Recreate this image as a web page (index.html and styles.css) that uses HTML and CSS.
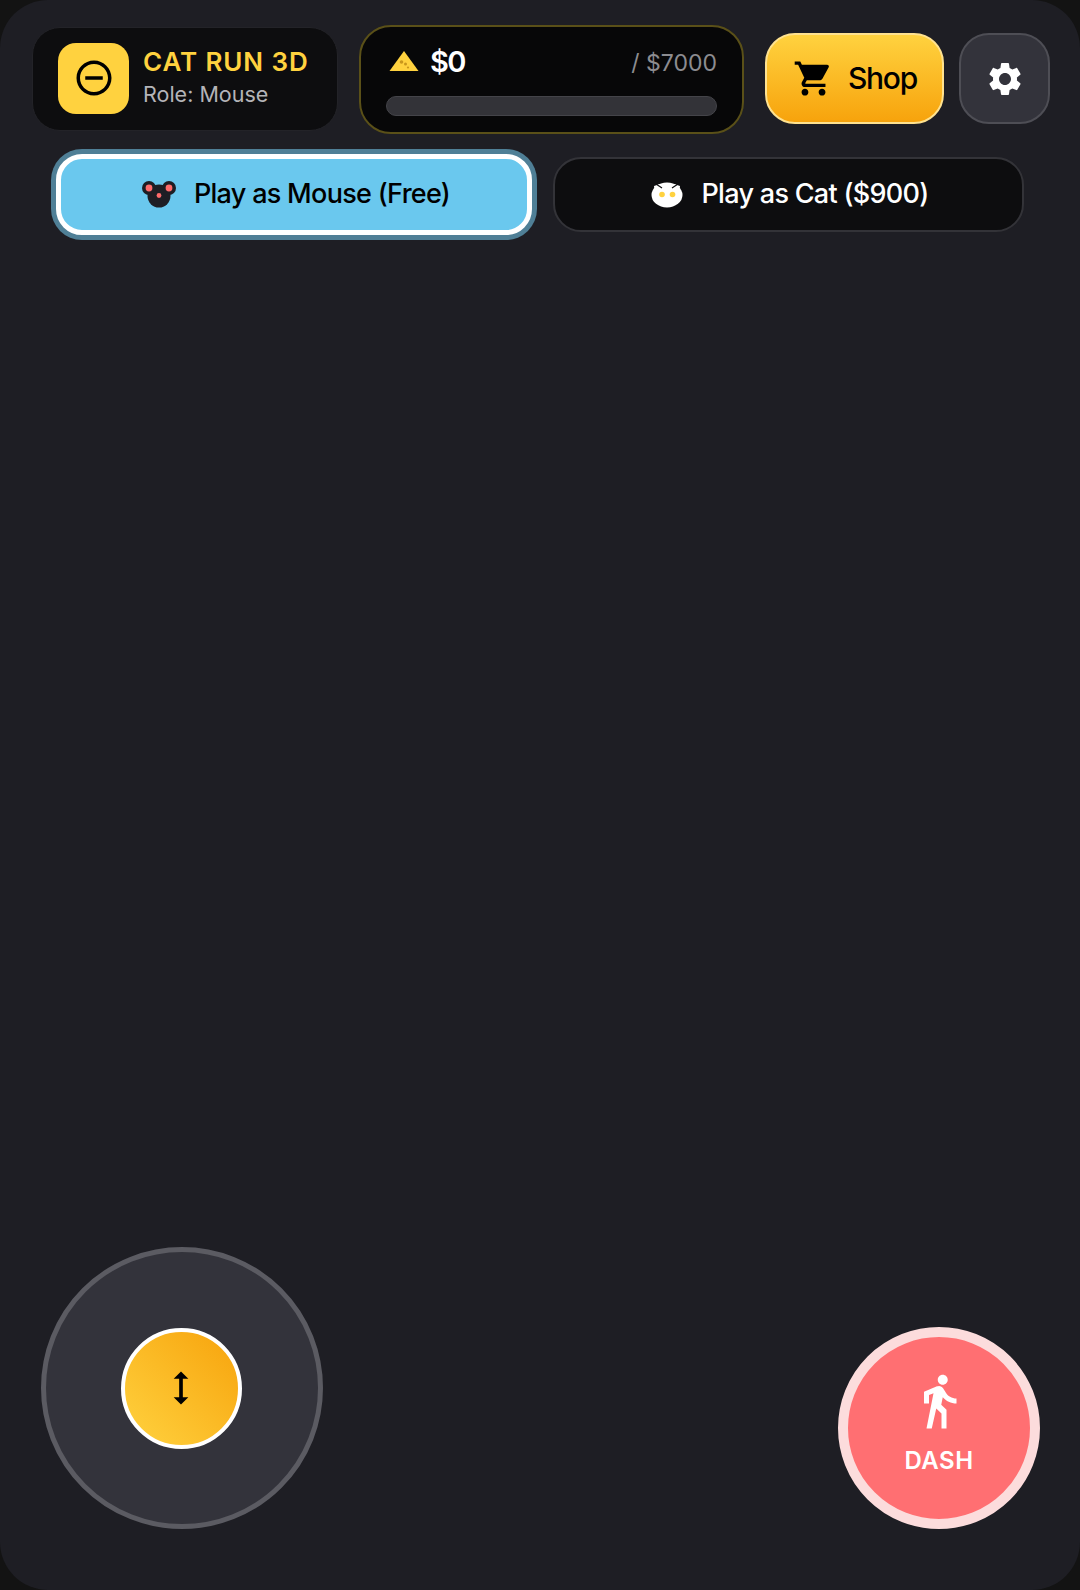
FILE: index.html
```html
<!DOCTYPE html>
<html lang="en">
<head>
    <title>Cat Run 3D</title>
    <link rel="stylesheet" href="styles.css">
</head>
<body>
    <div class="frame">
        <div class="topbar">
            <div class="title-panel">
                <div class="logo">
                    <svg class="logo-icon" viewBox="0 0 24 24"><path d="M7 11v2h10v-2H7zm5-9C6.48 2 2 6.48 2 12s4.48 10 10 10 10-4.48 10-10S17.52 2 12 2zm0 18c-4.41 0-8-3.59-8-8s3.59-8 8-8 8 3.59 8 8-3.59 8-8 8z"/></svg>
                </div>
                <div class="title-text">
                    <div class="game-name">CAT RUN 3D</div>
                    <div class="role">Role: Mouse</div>
                </div>
            </div>

            <div class="score-panel">
                <div class="score-row">
                    <svg class="cheese" viewBox="0 0 30 22">
                        <path d="M15 1L29.500 21H.5z" fill="#ffd23f"/>
                        <circle cx="12.500" cy="12" r="1.800" fill="#c9971c"/>
                        <circle cx="16.500" cy="14" r="1.500" fill="#c9971c"/>
                        <circle cx="19" cy="17.500" r="1.100" fill="#c9971c"/>
                    </svg>
                    <span class="score">$0</span>
                    <span class="goal">/ $7000</span>
                </div>
                <div class="progress"></div>
            </div>

            <button class="shop-btn">
                <svg class="shop-icon" viewBox="0 0 24 24"><path d="M7 18c-1.100 0-1.990.9-1.990 2S5.900 22 7 22s2-.9 2-2-.9-2-2-2zM1 2v2h2l3.600 7.590-1.350 2.450c-.16.28-.25.61-.25.96 0 1.100.9 2 2 2h12v-2H7.420c-.14 0-.25-.11-.25-.25l.03-.12.9-1.630h7.450c.75 0 1.410-.41 1.750-1.030l3.580-6.490c.08-.14.12-.31.12-.48 0-.55-.45-1-1-1H5.210l-.94-2H1zm16 16c-1.100 0-1.990.9-1.990 2s.89 2 1.990 2 2-.9 2-2-.9-2-2-2z"/></svg>
                <span class="shop-label">Shop</span>
            </button>

            <button class="settings-btn">
                <svg class="settings-icon" viewBox="0 0 24 24"><path d="M19.140 12.940c.04-.3.06-.61.06-.94 0-.32-.02-.64-.07-.94l2.030-1.580c.18-.14.23-.41.12-.61l-1.920-3.320c-.12-.22-.37-.29-.59-.22l-2.390.96c-.5-.38-1.030-.7-1.620-.94l-.36-2.540c-.04-.24-.24-.41-.48-.41h-3.840c-.24 0-.43.17-.47.41l-.36 2.540c-.59.24-1.130.57-1.620.94l-2.390-.96c-.22-.08-.47 0-.59.22L2.740 8.870c-.12.21-.08.47.12.61l2.030 1.580c-.05.3-.09.63-.09.94s.02.64.07.94l-2.030 1.580c-.18.14-.23.41-.12.61l1.920 3.320c.12.22.37.29.59.22l2.390-.96c.5.38 1.030.7 1.620.94l.36 2.540c.05.24.24.41.48.41h3.840c.24 0 .44-.17.47-.41l.36-2.540c.59-.24 1.130-.56 1.620-.94l2.390.96c.22.08.47 0 .59-.22l1.920-3.320c.12-.22.07-.47-.12-.61l-2.010-1.580zM12 15.600c-1.980 0-3.600-1.620-3.600-3.600s1.620-3.600 3.600-3.600 3.600 1.620 3.600 3.600-1.620 3.600-3.600 3.600z"/></svg>
            </button>
        </div>

        <div class="modes">
            <button class="mode-btn mode-mouse">
                <svg class="mode-icon" viewBox="0 0 36 28">
                    <circle cx="8" cy="8" r="7" fill="#1e1e24"/>
                    <circle cx="28" cy="8" r="7" fill="#1e1e24"/>
                    <circle cx="18" cy="16" r="11.500" fill="#1e1e24"/>
                    <circle cx="8" cy="8" r="3.400" fill="#ff6b6b"/>
                    <circle cx="28" cy="8" r="3.400" fill="#ff6b6b"/>
                    <circle cx="18" cy="15.500" r="2.400" fill="#ff6b6b"/>
                </svg>
                Play as Mouse (Free)
            </button>
            <button class="mode-btn mode-cat">
                <svg class="mode-icon" viewBox="0 0 36 28">
                    <path d="M5 6l6-2h14l6 2-1 8H6z" fill="#fff"/>
                    <ellipse cx="18" cy="15" rx="15.500" ry="12.500" fill="#fff"/>
                    <path d="M7 4l6 4M29 4l-6 4" stroke="#0d0d0f" stroke-width="1.200"/>
                    <circle cx="13" cy="14.500" r="2.800" fill="#ffd23f"/>
                    <circle cx="23.500" cy="14.500" r="2.800" fill="#ffd23f"/>
                </svg>
                Play as Cat ($900)
            </button>
        </div>

        <div class="controls">
            <div class="joystick">
                <div class="knob">
                    <svg class="knob-icon" viewBox="0 0 24 24"><path d="M13 6.990h3L12 3 8 6.990h3v10.020H8L12 21l4-3.990h-3z"/></svg>
                </div>
            </div>
            <button class="dash-btn">
                <svg class="dash-icon" viewBox="0 0 24 24"><path d="M13.500 5.500c1.100 0 2-.9 2-2s-.9-2-2-2-2 .9-2 2 .9 2 2 2zM9.800 8.900L7 23h2.100l1.800-8 2.100 2v6h2v-7.500l-2.100-2 .6-3C14.800 12 16.800 13 19 13v-2c-1.900 0-3.500-1-4.300-2.400l-1-1.600c-.4-.6-1-1-1.700-1-.3 0-.5.1-.8.1L6 8.300V13h2V9.600l1.800-.7"/></svg>
                <span>DASH</span>
            </button>
        </div>
    </div>
</body>
</html>
```

FILE: styles.css
```css
/* General styling */
* {
    box-sizing: border-box;
}

body {
    margin: 0;
    background-color: #131313;
    font-family: Inter, "Liberation Sans", sans-serif;
    overflow: hidden;
}

button {
    font-family: inherit;
    cursor: pointer;
    padding: 0;
}

.frame {
    display: flex;
    flex-direction: column;
    height: 1590px;
    background-color: #1e1e24;
    border-radius: 48px;
}

/* Top bar */
.topbar {
    display: flex;
    align-items: flex-start;
    padding: 25px 30px 0 32px;
}

.title-panel {
    display: flex;
    align-items: center;
    gap: 14px;
    width: 306px;
    height: 104px;
    margin-top: 2px;
    padding-left: 25px;
    background-color: #0d0d0f;
    border: 1px solid #232328;
    border-radius: 28px;
}

.logo {
    display: flex;
    align-items: center;
    justify-content: center;
    width: 71px;
    height: 71px;
    margin-bottom: 2px;
    background-color: #ffd23f;
    border-radius: 18px;
}

.logo-icon {
    width: 42px;
    height: 42px;
}

.game-name {
    color: #ffd23f;
    font-size: 26px;
    font-weight: 600;
    letter-spacing: .9px;
    line-height: 30px;
}

.role {
    margin-top: 4px;
    margin-bottom: 5px;
    color: #b4b4b8;
    font-size: 21.500px;
    line-height: 26px;
}

.score-panel {
    width: 385px;
    height: 109px;
    margin-left: 21px;
    padding: 16px 25px 0;
    background-color: #070708;
    border: 2px solid #5a5018;
    border-radius: 32px;
}

.score-row {
    display: flex;
    align-items: center;
    height: 36px;
    padding-left: 3px;
}

.cheese {
    width: 30px;
    height: 22px;
}

.score {
    margin-left: 11px;
    color: #fff;
    font-size: 29px;
    font-weight: 600;
    letter-spacing: -1.500px;
}

.goal {
    margin-top: 3px;
    margin-left: auto;
    color: #8c8c90;
    font-size: 23px;
}

.progress {
    height: 20px;
    margin-top: 17px;
    background-color: #333338;
    border: 1px solid #444449;
    border-radius: 10px;
}

.shop-btn {
    display: flex;
    align-items: center;
    gap: 14px;
    width: 179px;
    height: 91px;
    margin: 8px 0 0 21px;
    padding-left: 26px;
    color: #000;
    font-size: 30px;
    font-weight: 500;
    letter-spacing: -1.300px;
    background: linear-gradient(180deg, #ffd23f, #f7a30c);
    border: 2px solid #ffe28f;
    border-radius: 30px;
}

.shop-label {
    margin-bottom: 2px;
}

.shop-icon {
    width: 41px;
    height: 41px;
}

.settings-btn {
    display: flex;
    align-items: center;
    justify-content: center;
    width: 91px;
    height: 91px;
    margin: 8px 0 0 15px;
    background-color: #33333b;
    border: 2px solid #4e4e55;
    border-radius: 30px;
}

.settings-icon {
    width: 40px;
    height: 40px;
    fill: #fff;
}

/* Play as buttons */
.modes {
    display: flex;
    align-items: center;
    gap: 21px;
    margin-top: 20px;
    padding-left: 56px;
}

.mode-btn {
    display: flex;
    align-items: center;
    justify-content: center;
    gap: 17px;
    padding-bottom: 2px;
    font-size: 27px;
    font-weight: 500;
    letter-spacing: -.7px;
}

.mode-icon {
    width: 36px;
    height: 28px;
}

.mode-mouse {
    width: 476px;
    height: 81px;
    padding-left: 3px;
    color: #000;
    background-color: #6ac8ee;
    border: 5px solid #fff;
    border-radius: 26px;
    box-shadow: 0 0 0 5px #4f7f96;
}

.mode-cat {
    width: 471px;
    height: 75px;
    color: #fff;
    background-color: #0d0d0f;
    border: 2px solid #333338;
    border-radius: 28px;
}

/* Bottom controls */
.controls {
    display: flex;
    align-items: flex-end;
    justify-content: space-between;
    margin-top: auto;
    padding: 0 40px 61px 41px;
}

.joystick {
    display: flex;
    align-items: center;
    justify-content: center;
    width: 282px;
    height: 282px;
    background-color: #33333b;
    border: 5px solid #5b5b62;
    border-radius: 50%;
}

.knob {
    display: flex;
    align-items: center;
    justify-content: center;
    width: 121px;
    height: 121px;
    margin: 0 2px 0 0;
    background: linear-gradient(45deg, #ffd23f, #f7a30c);
    border: 4px solid #fff;
    border-radius: 50%;
}

.knob-icon {
    width: 44px;
    height: 44px;
}

.dash-btn {
    display: flex;
    flex-direction: column;
    align-items: center;
    justify-content: center;
    width: 202px;
    height: 202px;
    padding-bottom: 11px;
    color: #fff;
    font-size: 24px;
    font-weight: 600;
    letter-spacing: .5px;
    background-color: #ff6f72;
    border: 10px solid #fcdcdc;
    border-radius: 50%;
}

.dash-icon {
    width: 60px;
    height: 60px;
    margin-bottom: 15px;
    fill: #fff;
}
```
